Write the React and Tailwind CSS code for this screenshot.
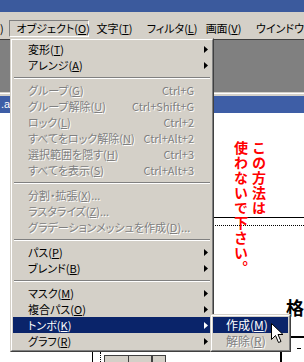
import React from "react";

const Arrow = ({ white }) => (
  <svg width="4" height="7" viewBox="0 0 4 7" className="block">
    <polygon points="0,0 4,3.5 0,7" fill={white ? "#ffffff" : "#000000"} />
  </svg>
);

const L = ({ a, u, b }) => (
  <span className="whitespace-nowrap">
    {a}
    <span className="underline underline-offset-[1px]">{u}</span>
    {b}
  </span>
);

const items = [
  { l: ["変形(", "T", ")"], sub: true },
  { l: ["アレンジ(", "A", ")"], sub: true },
  { sep: true },
  { l: ["グループ(", "G", ")"], k: "Ctrl+G", dis: true },
  { l: ["グループ解除(", "U", ")"], k: "Ctrl+Shift+G", dis: true },
  { l: ["ロック(", "L", ")"], k: "Ctrl+2", dis: true },
  { l: ["すべてをロック解除(", "N", ")"], k: "Ctrl+Alt+2", dis: true },
  { l: ["選択範囲を隠す(", "H", ")"], k: "Ctrl+3", dis: true },
  { l: ["すべてを表示(", "S", ")"], k: "Ctrl+Alt+3", dis: true },
  { sep: true },
  { l: ["分割・拡張(", "X", ")..."], dis: true },
  { l: ["ラスタライズ(", "Z", ")..."], dis: true },
  { l: ["グラデーションメッシュを作成(", "D", ")..."], dis: true },
  { sep: true },
  { l: ["パス(", "P", ")"], sub: true },
  { l: ["ブレンド(", "B", ")"], sub: true },
  { sep: true },
  { l: ["マスク(", "M", ")"], sub: true },
  { l: ["複合パス(", "O", ")"], sub: true },
  { l: ["トンボ(", "K", ")"], sub: true, hi: true },
  { l: ["グラフ(", "R", ")"], sub: true },
];

const dis = "text-[#808080] [text-shadow:1px_1px_0_#ffffff]";

export default function App() {
  return (
    <div className="relative w-[304px] h-[362px] overflow-hidden bg-white font-['Noto_Sans_CJK_JP','Noto_Sans',sans-serif] text-[11px] leading-none text-black [font-feature-settings:'palt']">
      {/* app title bar remnant */}
      <div className="h-[12px] bg-[#3b5a9d]" />
      {/* menu bar */}
      <div className="h-[27px] bg-[#d4d0c8] pt-[8px] flex">
        <div className="w-[10px] h-[17px] flex items-center">)</div>
        <div className="w-[80px] h-[17px] flex items-center pl-[6px] border border-t-[#808080] border-l-[#808080] border-r-white border-b-white">
          <L a="オブジェクト(" u="O" b=")" />
        </div>
        <div className="w-[53px] h-[17px] flex items-center pl-[7px]">
          <L a="文字(" u="T" b=")" />
        </div>
        <div className="w-[62px] h-[17px] flex items-center pl-[7px]">
          <L a="フィルタ(" u="L" b=")" />
        </div>
        <div className="w-[53px] h-[17px] flex items-center pl-[7px]">
          <L a="画面(" u="V" b=")" />
        </div>
        <div className="h-[17px] flex items-center pl-[7px] whitespace-nowrap">ウインドウ</div>
      </div>
      {/* MDI grey area */}
      <div className="h-[53px] bg-[#808080] border-t border-[#404040]" />
      {/* document window border */}
      <div className="h-[1px] bg-[#d4d0c8]" />
      <div className="h-[1px] bg-white" />
      <div className="h-[2px] bg-[#d4d0c8]" />
      <div className="h-[17px] bg-[#3e5ea6] text-white text-[11px] flex items-center pl-[1px] font-['Liberation_Sans',sans-serif]">
        .ai
      </div>
      {/* document canvas */}
      <div className="relative h-[249px] bg-white">
        <div className="absolute left-[150px] right-0 top-[104px] h-[1px] bg-black" />
        <div className="absolute left-[150px] right-0 top-[112px] h-0 border-t border-dotted border-black" />
        <div className="absolute left-[232px] top-[28px] [writing-mode:vertical-rl] text-[14px] font-bold text-[#ff0000] leading-[18px] tracking-[1px] [font-feature-settings:normal]">
          この方法は
          <br />
          使わないで下さい。
        </div>
        <div className="absolute left-[286px] top-[185px] text-[18px] font-bold leading-none [font-feature-settings:normal]">
          格
        </div>
        <div className="absolute left-[289px] right-0 top-[223px] h-[2px] bg-black" />
        <div className="absolute left-[280px] top-[227px] bottom-0 w-[2px] bg-black" />
        <div className="absolute left-[297px] top-[235px] w-[4px] h-[1px] bg-black" />
        <div className="absolute left-[92px] top-[239px] bottom-0 w-[1px] bg-black" />
        <div className="absolute left-[100px] top-[239px] bottom-0 w-0 border-l border-dotted border-black" />
        <div className="absolute left-[104px] top-[242px] w-[48px] h-[12px] border border-[#404040] bg-[#d4d0c8] flex">
          <div className="w-[24px] border-r border-[#404040]" />
        </div>
        <div className="absolute left-[152px] top-[242px] w-[14px] h-[12px] border border-[#404040] bg-[#d4d0c8]" />
      </div>

      {/* dropdown menu */}
      <div className="absolute left-[10px] top-[38px] w-[204px] border border-t-[#d4d0c8] border-l-[#d4d0c8] border-r-[#404040] border-b-[#404040] bg-[#d4d0c8]">
        <div className="border border-t-white border-l-white border-r-[#808080] border-b-[#808080] p-[1px]">
          {items.map((it, i) =>
            it.sep ? (
              <div key={i} className="h-[9px] px-[1px] pt-[4px]">
                <div className="h-[1px] bg-[#808080]" />
                <div className="h-[1px] bg-white" />
              </div>
            ) : (
              <div
                key={i}
                className={
                  "h-[16px] flex items-center pl-[15px] " +
                  (it.hi ? "bg-[#0a246a] text-white" : it.dis ? dis : "")
                }
              >
                <div className="flex-1">
                  <L a={it.l[0]} u={it.l[1]} b={it.l[2]} />
                </div>
                {it.k && <div className="whitespace-nowrap">{it.k}</div>}
                <div className="w-[17px] pl-[10px] flex items-center">
                  {it.sub && <Arrow white={it.hi} />}
                </div>
              </div>
            )
          )}
        </div>
      </div>

      {/* submenu */}
      <div className="absolute left-[210px] top-[314px] w-[81px] border border-t-[#d4d0c8] border-l-[#d4d0c8] border-r-[#404040] border-b-[#404040] bg-[#d4d0c8] text-[12px]">
        <div className="border border-t-white border-l-white border-r-[#808080] border-b-[#808080] p-[1px]">
          <div className="h-[16px] flex items-center pl-[13px] bg-[#0a246a] text-white">
            <L a="作成(" u="M" b=")" />
          </div>
          <div className={"h-[16px] flex items-center pl-[13px] " + dis}>
            <L a="解除(" u="R" b=")" />
          </div>
        </div>
      </div>

      {/* mouse cursor */}
      <svg className="absolute left-[271px] top-[323px]" width="13" height="21" viewBox="0 0 13 21">
        <path
          d="M0.5 0.5 L0.5 16.5 L4.5 12.5 L7.5 19.5 L10 18.5 L7 11.5 L12 11.5 Z"
          fill="#ffffff"
          stroke="#000000"
          strokeWidth="1"
          strokeLinejoin="miter"
        />
      </svg>
    </div>
  );
}
